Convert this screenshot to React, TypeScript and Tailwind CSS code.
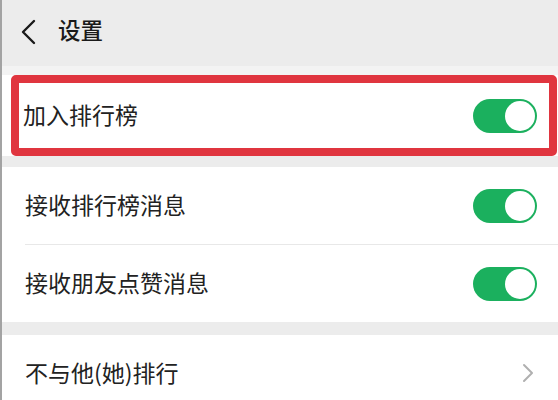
import React from 'react';

const font = { fontFamily: '"Noto Sans CJK SC", "Noto Sans", sans-serif' };

function Toggle() {
  return (
    <div className="w-[64px] h-[34px] rounded-full bg-[#1bb05e] flex items-center justify-end pr-[2px]">
      <div className="w-[30px] h-[30px] rounded-full bg-white" />
    </div>
  );
}

function Label({ children }: { children: React.ReactNode }) {
  return <span className="text-[23px] text-[#222] leading-none pb-[3px]">{children}</span>;
}

export default function App() {
  return (
    <div className="w-[558px] h-[400px] overflow-hidden bg-[#ececec] border-l-2 border-[#a3a3a3]" style={font}>
      {/* Header */}
      <header className="h-[66px] flex items-center pl-[18px] pb-[2px]">
        <svg width="16" height="26" viewBox="0 0 16 26" fill="none">
          <path d="M14 2 L3 13 L14 24" stroke="#1a1a1a" strokeWidth="2.4" strokeLinecap="round" strokeLinejoin="round" />
        </svg>
        <h1 className="ml-[22px] text-[22.5px] font-medium text-[#1a1a1a] leading-none pb-[5px]">设置</h1>
      </header>
      <div className="h-[9px] bg-[#f3f3f3]" />

      {/* Highlighted row */}
      <div className="bg-white pl-[9px] pr-px">
        <div className="h-[81px] border-[8px] border-[#e0353f] rounded-[5px] flex items-center justify-between pl-[4px] pr-[12px]">
          <Label>加入排行榜</Label>
          <Toggle />
        </div>
      </div>

      <div className="h-[11px]" />

      <div className="bg-white pl-[23px]">
        <div className="h-[78px] flex items-center justify-between border-b border-[#e8e8e8] pr-[21px]">
          <Label>接收排行榜消息</Label>
          <Toggle />
        </div>
        <div className="h-[77px] flex items-center justify-between pr-[21px]">
          <Label>接收朋友点赞消息</Label>
          <Toggle />
        </div>
      </div>

      <div className="h-[13px]" />

      <div className="bg-white pl-[23px]">
        <div className="h-[78px] flex items-center justify-between pr-[24px]">
          <Label>不与他(她)排行</Label>
          <svg width="12" height="20" viewBox="0 0 12 20" fill="none" className="mb-[2px]">
            <path d="M2 2 L10 10 L2 18" stroke="#b0b0b0" strokeWidth="2" strokeLinecap="round" strokeLinejoin="round" />
          </svg>
        </div>
      </div>
    </div>
  );
}
